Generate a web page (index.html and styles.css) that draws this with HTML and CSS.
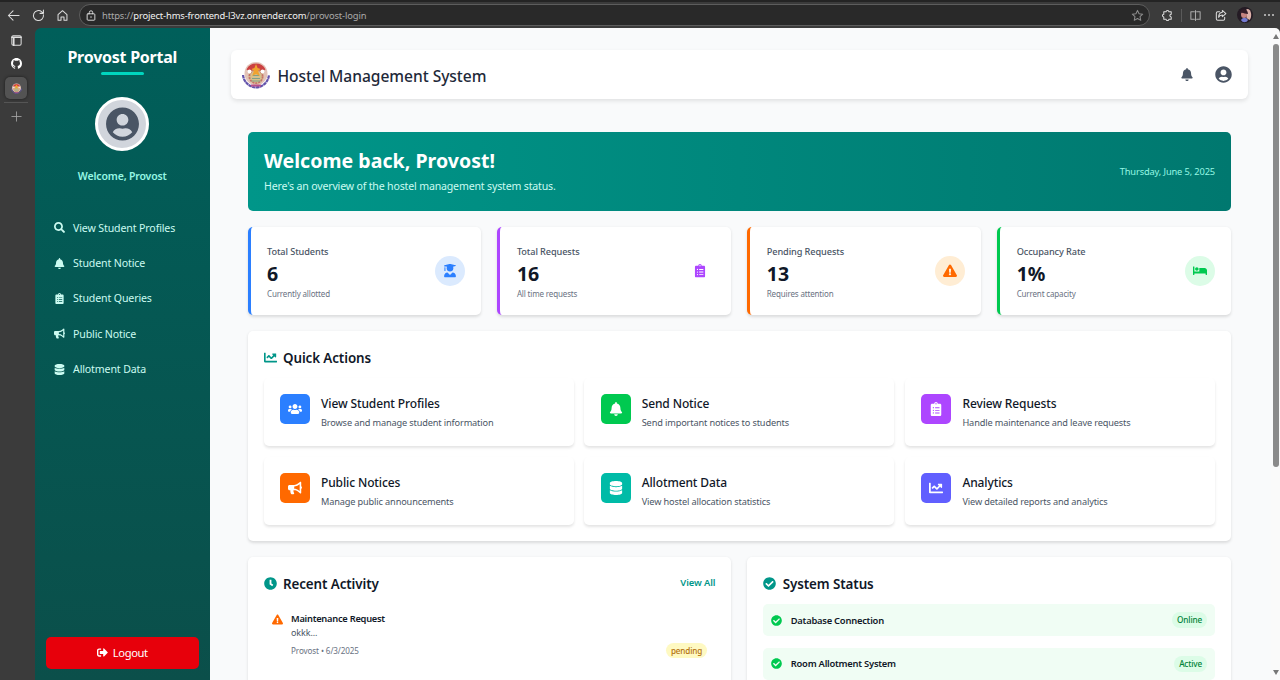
FILE: index.html
```html
<!DOCTYPE html>
<html lang="en">
<head>
<meta charset="utf-8">
<title>Provost Portal</title>
<link rel="stylesheet" href="styles.css">
</head>
<body>
<svg class="defs" width="0" height="0">
<symbol id="bell" viewBox="0 0 448 512"><path d="M224 512c35.32 0 63.97-28.65 63.97-64H160.03c0 35.35 28.65 64 63.97 64zm215.39-149.71c-19.32-20.76-55.47-51.99-55.47-154.29 0-77.7-54.48-139.9-127.94-155.16V32c0-17.67-14.32-32-31.98-32s-31.98 14.33-31.98 32v20.84C118.56 68.1 64.08 130.3 64.08 208c0 102.3-36.15 133.53-55.47 154.29-6 6.45-8.66 14.16-8.61 21.71.11 16.4 12.98 32 32.1 32h383.8c19.12 0 32-15.6 32.1-32 .05-7.55-2.61-15.27-8.61-21.71z"/></symbol>
<symbol id="search" viewBox="0 0 512 512"><path d="M505 442.7L405.3 343c-4.5-4.5-10.6-7-17-7H372c27.6-35.3 44-79.7 44-128C416 93.1 322.9 0 208 0S0 93.1 0 208s93.1 208 208 208c48.3 0 92.7-16.4 128-44v16.3c0 6.4 2.5 12.5 7 17l99.7 99.7c9.4 9.4 24.6 9.4 33.9 0l28.3-28.3c9.4-9.4 9.4-24.6.1-34zM208 336c-70.7 0-128-57.2-128-128 0-70.7 57.2-128 128-128 70.7 0 128 57.2 128 128 0 70.7-57.2 128-128 128z"/></symbol>
<symbol id="clipboard" viewBox="0 0 384 512"><path d="M336 64h-80c0-35.3-28.7-64-64-64s-64 28.7-64 64H48C21.5 64 0 85.5 0 112v352c0 26.5 21.5 48 48 48h288c26.5 0 48-21.5 48-48V112c0-26.5-21.5-48-48-48zM96 424c-13.3 0-24-10.7-24-24s10.7-24 24-24 24 10.7 24 24-10.7 24-24 24zm0-96c-13.3 0-24-10.7-24-24s10.7-24 24-24 24 10.7 24 24-10.7 24-24 24zm0-96c-13.3 0-24-10.7-24-24s10.7-24 24-24 24 10.7 24 24-10.7 24-24 24zm96-192c13.3 0 24 10.7 24 24s-10.7 24-24 24-24-10.7-24-24 10.7-24 24-24zm128 368c0 4.4-3.6 8-8 8H168c-4.4 0-8-3.6-8-8v-16c0-4.4 3.6-8 8-8h144c4.4 0 8 3.6 8 8v16zm0-96c0 4.4-3.6 8-8 8H168c-4.4 0-8-3.6-8-8v-16c0-4.4 3.6-8 8-8h144c4.4 0 8 3.6 8 8v16zm0-96c0 4.4-3.6 8-8 8H168c-4.4 0-8-3.6-8-8v-16c0-4.4 3.6-8 8-8h144c4.4 0 8 3.6 8 8v16z"/></symbol>
<symbol id="bullhorn" viewBox="0 0 576 512"><path d="M576 240c0-23.63-12.95-44.04-32-55.12V32.01C544 23.26 537.02 0 512 0c-7.12 0-14.19 2.38-19.98 7.02l-85.03 68.03C364.28 109.19 310.66 128 256 128H64c-35.35 0-64 28.65-64 64v96c0 35.35 28.65 64 64 64h33.7c-1.39 10.48-2.18 21.14-2.18 32 0 39.77 9.26 77.35 25.56 110.94 5.19 10.69 16.52 17.06 28.4 17.06h74.28c26.05 0 41.69-29.84 25.9-50.56-16.4-21.52-26.15-48.36-26.15-77.44 0-11.11 1.62-21.79 4.41-32H256c54.66 0 108.28 18.81 150.98 52.95l85.03 68.03a32.023 32.023 0 0 0 19.98 7.02c24.92 0 32-22.78 32-32V295.13C563.05 284.04 576 263.63 576 240zm-96 141.42l-33.05-26.44C392.95 311.78 325.12 288 256 288v-96c69.12 0 136.95-23.78 190.95-66.98L480 98.58v282.84z"/></symbol>
<symbol id="database" viewBox="0 0 448 512"><path d="M448 73.143v45.714C448 159.143 347.667 192 224 192S0 159.143 0 118.857V73.143C0 32.857 100.333 0 224 0s224 32.857 224 73.143zM448 176v102.857C448 319.143 347.667 352 224 352S0 319.143 0 278.857V176c48.125 33.143 136.208 48.572 224 48.572S399.874 209.143 448 176zm0 160v102.857C448 479.143 347.667 512 224 512S0 479.143 0 438.857V336c48.125 33.143 136.208 48.572 224 48.572S399.874 369.143 448 336z"/></symbol>
<symbol id="signout" viewBox="0 0 512 512"><path d="M497 273L329 441c-15 15-41 4.5-41-17v-96H152c-13.3 0-24-10.7-24-24v-96c0-13.3 10.7-24 24-24h136V88c0-21.4 25.9-32 41-17l168 168c9.3 9.4 9.3 24.6 0 34zM192 436v-40c0-6.6-5.4-12-12-12H96c-17.7 0-32-14.3-32-32V160c0-17.7 14.3-32 32-32h84c6.6 0 12-5.4 12-12V76c0-6.6-5.4-12-12-12H96c-53 0-96 43-96 96v192c0 53 43 96 96 96h84c6.6 0 12-5.4 12-12z"/></symbol>
<symbol id="chart" viewBox="0 0 512 512"><path d="M496 384H64V80c0-8.84-7.16-16-16-16H16C7.16 64 0 71.16 0 80v336c0 17.67 14.33 32 32 32h464c8.84 0 16-7.16 16-16v-32c0-8.84-7.16-16-16-16zM464 96H345.94c-21.38 0-32.09 25.85-16.97 40.97l32.4 32.4L288 242.75l-73.37-73.37c-12.5-12.5-32.76-12.5-45.25 0l-68.69 68.69c-6.25 6.25-6.25 16.38 0 22.63l22.62 22.62c6.25 6.25 16.38 6.25 22.63 0L192 237.25l73.37 73.37c12.5 12.5 32.76 12.5 45.25 0l96-96 32.4 32.4c15.12 15.12 40.97 4.41 40.97-16.97V112c.01-8.84-7.15-16-15.99-16z"/></symbol>
<symbol id="users" viewBox="0 0 640 512"><path d="M96 224c35.3 0 64-28.7 64-64s-28.7-64-64-64-64 28.7-64 64 28.7 64 64 64zm448 0c35.3 0 64-28.7 64-64s-28.7-64-64-64-64 28.7-64 64 28.7 64 64 64zm32 32h-64c-17.6 0-33.5 7.1-45.1 18.6 40.3 22.1 68.9 62 75.1 109.4h66c17.7 0 32-14.3 32-32v-32c0-35.3-28.7-64-64-64zm-256 0c61.9 0 112-50.1 112-112S381.9 32 320 32 208 82.1 208 144s50.1 112 112 112zm76.8 32h-8.3c-20.8 10-43.9 16-68.5 16s-47.6-6-68.5-16h-8.3C179.6 288 128 339.6 128 403.2V432c0 26.5 21.5 48 48 48h288c26.5 0 48-21.5 48-48v-28.8c0-63.6-51.6-115.2-115.2-115.2zm-223.7-13.4C161.5 263.1 145.6 256 128 256H64c-35.3 0-64 28.7-64 64v32c0 17.7 14.3 32 32 32h65.9c6.3-47.4 34.9-87.3 75.2-109.4z"/></symbol>
<symbol id="warning" viewBox="0 0 576 512"><path d="M569.517 440.013C587.975 472.007 564.806 512 527.94 512H48.054c-36.937 0-59.999-40.055-41.577-71.987L246.423 23.985c18.467-32.009 64.72-31.951 83.154 0l239.94 416.028zM288 354c-25.405 0-46 20.595-46 46s20.595 46 46 46 46-20.595 46-46-20.595-46-46-46zm-43.673-165.346l7.418 136c.347 6.364 5.609 11.346 11.982 11.346h48.546c6.373 0 11.635-4.982 11.982-11.346l7.418-136c.375-6.874-5.098-12.654-11.982-12.654h-63.383c-6.884 0-12.356 5.78-11.981 12.654z"/></symbol>
<symbol id="bed" viewBox="0 0 640 512"><path d="M176 256c44.11 0 80-35.89 80-80s-35.89-80-80-80-80 35.89-80 80 35.89 80 80 80zm352-128H304c-8.84 0-16 7.16-16 16v144H64V80c0-8.84-7.16-16-16-16H16C7.16 64 0 71.16 0 80v352c0 8.84 7.16 16 16 16h32c8.84 0 16-7.16 16-16v-48h512v48c0 8.84 7.16 16 16 16h32c8.84 0 16-7.16 16-16V240c0-61.86-50.14-112-112-112z"/></symbol>
<symbol id="graduate" viewBox="0 0 448 512"><path d="M319.4 320.6L224 416l-95.4-95.4C57.1 323.7 0 382.2 0 454.4v9.6c0 26.5 21.5 48 48 48h352c26.5 0 48-21.5 48-48v-9.6c0-72.2-57.1-130.7-128.6-133.8zM13.6 79.8l6.4 1.5v58.4c-7 4.2-12 11.5-12 20.3 0 8.4 4.6 15.4 11.1 19.7L3.5 242c-1.7 6.9 2.1 14 7.6 14h41.8c5.5 0 9.3-7.1 7.6-14l-15.6-62.3C51.4 175.4 56 168.4 56 160c0-8.8-5-16.1-12-20.3V87.1l66 15.9c-8.6 17.2-14 36.4-14 57 0 70.7 57.3 128 128 128s128-57.3 128-128c0-20.6-5.3-39.8-14-57l96.3-23.2c18.2-4.4 18.2-27.1 0-31.5l-190.4-46c-13-3.1-26.7-3.1-39.7 0L13.6 48.2c-18.1 4.4-18.1 27.2 0 31.6z"/></symbol>
<symbol id="check" viewBox="0 0 512 512"><path d="M504 256c0 136.967-111.033 248-248 248S8 392.967 8 256 119.033 8 256 8s248 111.033 248 248zM227.314 387.314l184-184c6.248-6.248 6.248-16.379 0-22.627l-22.627-22.627c-6.248-6.249-16.379-6.249-22.628 0L216 308.118l-70.059-70.059c-6.248-6.248-16.379-6.248-22.628 0l-22.627 22.627c-6.248 6.248-6.248 16.379 0 22.627l104 104c6.249 6.249 16.379 6.249 22.628.001z"/></symbol>
<symbol id="clock" viewBox="0 0 512 512"><path d="M256 8C119 8 8 119 8 256s111 248 248 248 248-111 248-248S393 8 256 8zm57.1 350.1L224.9 294c-3.1-2.3-4.9-5.9-4.9-9.7V116c0-6.6 5.4-12 12-12h48c6.6 0 12 5.4 12 12v137.7l63.5 46.2c5.4 3.9 6.5 11.4 2.6 16.8l-28.2 38.8c-3.9 5.3-11.4 6.5-16.8 2.6z"/></symbol>
<symbol id="user" viewBox="0 0 496 512"><path d="M248 8C111 8 0 119 0 256s111 248 248 248 248-111 248-248S385 8 248 8zm0 96c48.6 0 88 39.4 88 88s-39.4 88-88 88-88-39.4-88-88 39.4-88 88-88zm0 344c-58.7 0-111.3-26.6-146.5-68.2 18.8-35.4 55.6-59.8 98.5-59.8 2.4 0 4.8.4 7.1 1.1 13 4.2 26.6 6.9 40.9 6.9 14.3 0 28-2.7 40.9-6.9 2.3-.7 4.7-1.1 7.1-1.1 42.9 0 79.7 24.4 98.5 59.8C359.3 421.4 306.7 448 248 448z"/></symbol>
<symbol id="github" viewBox="0 0 16 16"><path d="M8 0C3.58 0 0 3.58 0 8c0 3.54 2.29 6.53 5.47 7.59.4.07.55-.17.55-.38 0-.19-.01-.82-.01-1.49-2.01.37-2.53-.49-2.69-.94-.09-.23-.48-.94-.82-1.13-.28-.15-.68-.52-.01-.53.63-.01 1.08.58 1.23.82.72 1.21 1.87.87 2.33.66.07-.52.28-.87.51-1.07-1.78-.2-3.64-.89-3.64-3.95 0-.87.31-1.59.82-2.15-.08-.2-.36-1.02.08-2.12 0 0 .67-.21 2.2.82.64-.18 1.32-.27 2-.27s1.36.09 2 .27c1.53-1.04 2.2-.82 2.2-.82.44 1.1.16 1.92.08 2.12.51.56.82 1.27.82 2.15 0 3.07-1.87 3.75-3.65 3.95.29.25.54.73.54 1.48 0 1.07-.01 1.93-.01 2.2 0 .21.15.46.55.38A8.01 8.01 0 0 0 16 8c0-4.42-3.58-8-8-8z"/></symbol>
<symbol id="crest" viewBox="0 0 28 28">
<circle cx="14" cy="12.500" r="11.500" fill="#e3c3b8"/>
<path d="M4.500 8.500A10.600 10.600 0 0 1 23.500 8.500L19 11 14 7 9 11z" fill="#cb4040"/>
<path d="M1 14c.5 5 3.500 9 7.500 11 3.500 1.800 7.500 1.800 11 0 4-2 7-6 7.500-11" fill="none" stroke="#6353aa" stroke-width="2.200" stroke-dasharray="3.500 .4"/>
<circle cx="14" cy="15.500" r="7.600" fill="#d5c08c"/>
<circle cx="14" cy="15.500" r="6.600" fill="none" stroke="#c8706a" stroke-width="1.700" stroke-dasharray="2 1"/>
<path d="M9.500 20h9M10 17.500h8M11 14.500h6" stroke="#7f9f88" stroke-width="1.200"/>
<path d="M14 3l1.600 4 3 1-2.600 2 2 5-4-2-4 2 2-5-2.600-2 3-1z" fill="#f0a22e"/>
<circle cx="7.500" cy="10.500" r="1.900" fill="#fff"/><circle cx="20.500" cy="10.500" r="1.900" fill="#fff"/>
<path d="M9 24.500h10" stroke="#b8518a" stroke-width="2"/>
</symbol>
</svg>

<div class="browser">
  <header class="toolbar">
    <svg class="tool back" viewBox="0 0 14 14"><path d="M13 7H2M6.500 2L1.500 7l5 5"/></svg>
    <svg class="tool reload" viewBox="0 0 14 14"><path d="M12.300 6.300A5.400 5.400 0 1 1 10.500 3l1.700 1.600M12.300 1v3.700H8.600"/></svg>
    <svg class="tool home" viewBox="0 0 14 14"><path d="M2.200 6L7 1.800 11.800 6v6H8.600V8.500H5.400V12H2.200z"/></svg>
    <div class="address">
      <svg class="tool lock" viewBox="0 0 14 14"><rect x="2.500" y="5" width="9" height="7.500" rx="1"/><path d="M5 5V3.500a2 2 0 0 1 4 0V5M7 8.300v1"/></svg>
      <span class="url">https://<b>project-hms-frontend-l3vz.onrender.com</b>/provost-login</span>
      <svg class="tool star" viewBox="0 0 14 14"><path d="M7 1.500l1.700 3.600 3.900.5-2.900 2.700.8 3.900L7 10.300l-3.500 1.900.8-3.900L1.400 5.600l3.900-.5z"/></svg>
    </div>
    <svg class="tool puzzle" viewBox="0 0 14 14"><path d="M3 3h2.500c0-2 3-2 3 0H11v2.700c-2 0-2 2.800 0 2.800V11H8.500c0 2-3 2-3 0H3V8.500c-2 0-2-2.800 0-2.800z"/></svg>
    <i class="divider"></i>
    <svg class="tool split" viewBox="0 0 14 14"><path d="M5.800 3H2v8h3.800M8.200 3H12v8H8.200M7 1.500v11"/></svg>
    <svg class="tool share" viewBox="0 0 14 14"><path d="M6 3H4Q2.500 3 2.500 4.500v6Q2.500 12 4 12h6q1.500 0 1.500-1.500V9M9 1.500L12.800 5 9 8.300V6.500Q6 6.500 5 9q0-5 4-5.500z"/></svg>
    <svg class="face" viewBox="0 0 16 16"><circle cx="8" cy="8" r="8" fill="#241b24"/><path d="M9.500 2c5-1 6 8 3 11l-3-2z" fill="#dcb0a8"/><ellipse cx="7" cy="7.500" rx="3" ry="3.500" fill="#c68480"/><path d="M3 6c0-5 8-5 8 1-3 0-5-2-8-1z" fill="#341d28"/><path d="M4 13c2-3 5-3 7 0-1.500 3-5.500 3-7 0z" fill="#747bd1"/></svg>
    <span class="dots"><i></i><i></i><i></i></span>
  </header>
  <div class="window">
    <aside class="tabs">
      <svg class="tool tabicon" viewBox="0 0 14 14"><rect x="2" y="2" width="10" height="10" rx="1.500"/><path d="M2 3.500h10M4 4v8" class="thick"/></svg>
      <svg class="github"><use href="#github"/></svg>
      <div class="active-tab"><svg><use href="#crest"/></svg></div>
      <hr>
      <svg class="tool plus" viewBox="0 0 14 14"><path d="M7 2v10M2 7h10"/></svg>
    </aside>

    <nav class="sidebar">
      <h1>Provost Portal</h1>
      <span class="underline"></span>
      <div class="avatar"><svg><use href="#user"/></svg></div>
      <p class="welcome">Welcome, Provost</p>
      <ul>
        <li><svg><use href="#search"/></svg><span>View Student Profiles</span></li>
        <li><svg><use href="#bell"/></svg><span>Student Notice</span></li>
        <li><svg><use href="#clipboard"/></svg><span>Student Queries</span></li>
        <li><svg><use href="#bullhorn"/></svg><span>Public Notice</span></li>
        <li><svg><use href="#database"/></svg><span>Allotment Data</span></li>
      </ul>
      <button class="logout"><svg><use href="#signout"/></svg><span>Logout</span></button>
    </nav>

    <main class="page">
      <div class="titlebar">
        <svg class="logo"><use href="#crest"/></svg>
        <h2>Hostel Management System</h2>
        <svg class="bell"><use href="#bell"/></svg>
        <svg class="account"><use href="#user"/></svg>
      </div>
      <div class="content">
        <section class="banner">
          <div><h2>Welcome back, Provost!</h2><p>Here's an overview of the hostel management system status.</p></div>
          <time>Thursday, June 5, 2025</time>
        </section>

        <section class="stats">
          <article class="stat blue"><div><p class="label">Total Students</p><p class="number">6</p><p class="note">Currently allotted</p></div><span class="bubble"><svg><use href="#graduate"/></svg></span></article>
          <article class="stat purple"><div><p class="label">Total Requests</p><p class="number">16</p><p class="note">All time requests</p></div><span class="bubble"><svg><use href="#clipboard"/></svg></span></article>
          <article class="stat orange"><div><p class="label">Pending Requests</p><p class="number">13</p><p class="note">Requires attention</p></div><span class="bubble"><svg><use href="#warning"/></svg></span></article>
          <article class="stat green"><div><p class="label">Occupancy Rate</p><p class="number">1%</p><p class="note">Current capacity</p></div><span class="bubble"><svg><use href="#bed"/></svg></span></article>
        </section>

        <section class="panel quick">
          <h3><svg><use href="#chart"/></svg><span>Quick Actions</span></h3>
          <div class="actions">
            <article><span class="tile t-blue"><svg><use href="#users"/></svg></span><div><h4>View Student Profiles</h4><p>Browse and manage student information</p></div></article>
            <article><span class="tile t-green"><svg><use href="#bell"/></svg></span><div><h4>Send Notice</h4><p>Send important notices to students</p></div></article>
            <article><span class="tile t-purple"><svg><use href="#clipboard"/></svg></span><div><h4>Review Requests</h4><p>Handle maintenance and leave requests</p></div></article>
            <article><span class="tile t-orange"><svg><use href="#bullhorn"/></svg></span><div><h4>Public Notices</h4><p>Manage public announcements</p></div></article>
            <article><span class="tile t-teal"><svg><use href="#database"/></svg></span><div><h4>Allotment Data</h4><p>View hostel allocation statistics</p></div></article>
            <article><span class="tile t-indigo"><svg><use href="#chart"/></svg></span><div><h4>Analytics</h4><p>View detailed reports and analytics</p></div></article>
          </div>
        </section>

        <div class="columns">
          <section class="panel">
            <h3><svg><use href="#clock"/></svg><span>Recent Activity</span><a>View All</a></h3>
            <div class="activity">
              <svg><use href="#warning"/></svg>
              <div class="detail"><p class="what">Maintenance Request</p><p class="message">okkk...</p><p class="meta"><span>Provost • 6/3/2025</span><em>pending</em></p></div>
            </div>
          </section>
          <section class="panel">
            <h3><svg><use href="#check"/></svg><span>System Status</span></h3>
            <div class="status"><svg><use href="#check"/></svg><span>Database Connection</span><em>Online</em></div>
            <div class="status"><svg><use href="#check"/></svg><span>Room Allotment System</span><em>Active</em></div>
          </section>
        </div>
      </div>
    </main>
    <div class="scrollbar"><i class="up"></i><i class="thumb"></i><i class="down"></i></div>
  </div>
</div>
</body>
</html>
```
FILE: styles.css
```css
* { box-sizing: border-box; margin: 0; padding: 0; }
body { width: 1280px; height: 680px; overflow: hidden; background: #3b3b3b; font-family: "Noto Sans", "Open Sans", sans-serif; font-size: 10.2px; }
.defs { position: absolute; }
svg { display: block; flex: none; fill: currentColor; }
p, h1, h2, h3, h4, span, time, a, em { white-space: nowrap; font-style: normal; }
.browser { height: 680px; display: flex; flex-direction: column; }

.toolbar { height: 28px; flex: none; display: flex; align-items: center; padding: 0 6px 0 7px; background: #3b3b3b; border-top: 2px solid #242424; }
.tool { width: 13px; height: 13px; fill: none; stroke: #dedede; stroke-width: 1.1; stroke-linecap: round; stroke-linejoin: round; }
.reload { margin-left: 12px; }
.home { margin-left: 11px; }
.address { width: 1072px; height: 22px; margin-left: 10px; padding: 0 5px; display: flex; align-items: center; border: 1px solid #5d5d5d; border-radius: 11px; background: #292929; }
.lock { width: 12px; }
.url { margin-left: 5px; flex: 1; font-size: 9.4px; letter-spacing: -.13px; color: #a9a9a9; }
.url b { font-weight: 400; color: #f2f2f2; }
.star { stroke: #8d8d8d; }
.puzzle { margin-left: 11px; }
.divider { width: 1px; height: 13px; margin-left: 7px; background: #5a5a5a; }
.split { margin-left: 7px; stroke: #aaa; }
.share { margin-left: 12px; }
.face { width: 16px; height: 16px; margin-left: 10px; }
.dots { display: flex; gap: 2px; margin-left: 11px; }
.dots i { width: 2px; height: 2px; border-radius: 50%; background: #ccc; }

.window { height: 652px; display: flex; }
.tabs { width: 35px; flex: none; display: flex; flex-direction: column; align-items: center; padding: 6px 3px 0 0; }
.tabicon { width: 13px; height: 13px; }
.thick { stroke-width: 1.8; }
.github { width: 11px; height: 11px; margin-top: 11px; color: #fff; }
.active-tab { width: 22px; height: 22px; margin-top: 8px; display: grid; place-items: center; border-radius: 5px; background: #535353; box-shadow: 0 0 3px #1c1c1c; }
.active-tab svg { width: 11px; height: 11px; }
.tabs hr { width: 24px; margin-top: 3px; border: 0; border-top: 1px solid #555; }
.plus { margin-top: 7px; stroke: #a6a6a6; stroke-width: .9; }

.sidebar { width: 174.500px; flex: none; display: flex; flex-direction: column; align-items: center; padding: 18px 11px 11.500px; border-top-left-radius: 6px; background: linear-gradient(#005f5a, #0b4f4a); color: #cbfbf1; }
.sidebar h1 { font-size: 16px; line-height: 22px; letter-spacing: -.25px; font-weight: 700; color: #fff; }
.underline { width: 43px; height: 3px; margin-top: 4px; border-radius: 2px; background: #00d5be; }
.avatar { width: 54px; height: 54px; margin-top: 22px; display: grid; place-items: center; border: 3px solid #fff; border-radius: 50%; background: #d1d5dc; color: #4a5565; }
.avatar svg { width: 33px; height: 34px; }
.welcome { margin-top: 17px; line-height: 16px; font-size: 10.500px; font-weight: 600; letter-spacing: -.15px; color: #96f7e4; }
.sidebar ul { align-self: stretch; margin-top: 26px; list-style: none; }
.sidebar li { height: 35.400px; padding-left: 8px; display: flex; align-items: center; gap: 8px; font-size: 10.600px; letter-spacing: -.13px; }
.sidebar li svg { width: 11px; height: 11px; }
.logout { width: 153px; height: 32px; margin-top: auto; display: flex; align-items: center; justify-content: center; gap: 5px; border: 0; border-radius: 5px; background: #e7000b; color: #fff; font: 11.200px "Noto Sans", sans-serif; letter-spacing: -.4px; }
.logout svg { width: 11px; height: 11px; }

.page { flex: 1; min-width: 0; height: 652px; overflow: hidden; padding: 22px 23px 0 21.500px; background: #f9fafb; }
.titlebar { height: 49px; display: flex; align-items: center; padding: 0 16px 0 11px; background: #fff; border-radius: 6px; box-shadow: 0 2px 4px rgba(0,0,0,.1); color: #4a5565; }
.logo { width: 28px; height: 28px; }
.titlebar h2 { margin-left: 7.500px; padding-top: 2px; flex: 1; font-size: 15.600px; font-weight: 500; letter-spacing: -.05px; color: #1e2939; }
.bell { width: 12px; height: 13px; }
.account { width: 17px; height: 17px; margin-left: 22px; }
.content { display: flex; flex-direction: column; gap: 16px; padding: 33px 17px 0 16.500px; }

.banner { height: 79px; display: flex; align-items: center; justify-content: space-between; padding: 0 16px 0 16.500px; border-radius: 5px; background: linear-gradient(to right, #009689, #00786f); }
.banner h2 { font-size: 19.500px; line-height: 25px; font-weight: 700; letter-spacing: .05px; color: #fff; }
.banner p { margin-top: 4px; line-height: 18px; font-size: 10.600px; letter-spacing: -.18px; color: #cbfbf1; }
.banner time { font-size: 9.300px; color: #96f7e4; letter-spacing: -.14px; }

.stats { display: grid; grid-template-columns: repeat(4, 1fr); gap: 16px; }
.stat { height: 88px; display: flex; align-items: center; justify-content: space-between; padding: 0 16.500px 0 16px; background: #fff; border-left: 3px solid; border-radius: 5px; box-shadow: 0 1.500px 3px rgba(0,0,0,.12); }
.stat > div { padding: 1px 0 0 .5px; }
.label { line-height: 15px; font-size: 9.200px; font-weight: 500; letter-spacing: -.1px; color: #4a5565; }
.number { line-height: 29px; font-size: 19.500px; font-weight: 700; color: #101828; }
.note { line-height: 12px; font-size: 8px; letter-spacing: -.15px; color: #6a7282; }
.bubble { width: 30px; height: 30px; display: grid; place-items: center; border-radius: 50%; }
.bubble svg { width: 14px; height: 13.500px; }
.blue { border-color: #2b7fff; } .blue .bubble { background: #dbeafe; color: #2b7fff; }
.purple { border-color: #ad46ff; } .purple .bubble { color: #ad46ff; }
.orange { border-color: #ff6900; } .orange .bubble { background: #ffedd4; color: #ff6900; }
.green { border-color: #00c950; } .green .bubble { background: #dcfce7; color: #00c950; }

.panel { background: #fff; border-radius: 5px; padding: 16px; box-shadow: 0 1.500px 3px rgba(0,0,0,.12); }
.panel h3 { height: 20px; display: flex; align-items: center; gap: 6.500px; font-size: 13.400px; line-height: 20px; font-weight: 600; letter-spacing: -.1px; color: #101828; }
.panel h3 svg { width: 13px; height: 13px; color: #009689; }
.panel h3 span { padding-top: 1px; }
.panel h3 a { margin-left: auto; font-size: 9.400px; font-weight: 600; color: #009689; }
.quick { height: 210px; }
.actions { display: grid; grid-template-columns: repeat(3, 1fr); gap: 11px 10.700px; margin-top: 11px; }
.actions article { height: 68px; display: flex; gap: 11px; padding: 16px 16px 16px 16.500px; border-radius: 5px; box-shadow: 0 2px 3px rgba(0,0,0,.11); }
.tile { width: 30px; height: 30px; display: grid; place-items: center; border-radius: 5px; color: #fff; }
.tile svg { width: 14px; height: 14px; }
.actions h4 { line-height: 20px; font-size: 12px; font-weight: 500; letter-spacing: -.12px; color: #101828; }
.actions p { margin-top: 1px; line-height: 16px; font-size: 9.200px; letter-spacing: -.14px; color: #4a5565; }
.t-blue { background: #2b7fff; } .t-green { background: #00c950; } .t-purple { background: #ad46ff; }
.t-orange { background: #ff6900; } .t-teal { background: #00bba7; } .t-indigo { background: #615fff; }

.columns { display: grid; grid-template-columns: 1fr 1fr; gap: 16px; }
.columns .panel { height: 200px; }
.activity { display: flex; gap: 8.500px; padding: 18px 8px 0; }
.activity svg { width: 11px; height: 11px; margin-top: 3px; color: #ff6900; }
.detail { flex: 1; }
.what { line-height: 15px; font-size: 9.300px; font-weight: 600; letter-spacing: -.25px; color: #101828; }
.message { line-height: 13px; font-size: 9px; letter-spacing: -.1px; color: #4a5565; }
.meta { height: 22px; display: flex; align-items: center; justify-content: space-between; font-size: 8.100px; letter-spacing: -.1px; color: #6a7282; }
.meta em { padding: 0 5px; line-height: 15px; border-radius: 8px; background: #fef9c2; color: #b3700a; font-weight: 500; letter-spacing: -.1px; }
.status { height: 32px; margin-top: 11.500px; display: flex; align-items: center; padding: 0 8px; border-radius: 5px; background: #f0fdf4; color: #101828; font-size: 9.400px; font-weight: 600; letter-spacing: -.24px; }
.panel h3 + .status { margin-top: 11px; }
.status svg { width: 11px; height: 11px; margin-right: 8.500px; color: #00c950; }
.status em { margin-left: auto; padding: 0 5px; line-height: 16px; border-radius: 8px; background: #dcfce7; color: #008236; font-size: 8.200px; font-weight: 500; letter-spacing: -.15px; }

.scrollbar { width: 9px; flex: none; display: flex; flex-direction: column; align-items: center; padding: 6px 0 5px; border-top-right-radius: 5px; background: #fafafa; }
.up { border: 3px solid transparent; border-top: 0; border-bottom: 5px solid #777; }
.thumb { width: 6px; height: 423px; margin-top: 5px; border-radius: 3px; background: #8a8a8a; }
.down { margin-top: auto; border: 3px solid transparent; border-bottom: 0; border-top: 5px solid #777; }
```
